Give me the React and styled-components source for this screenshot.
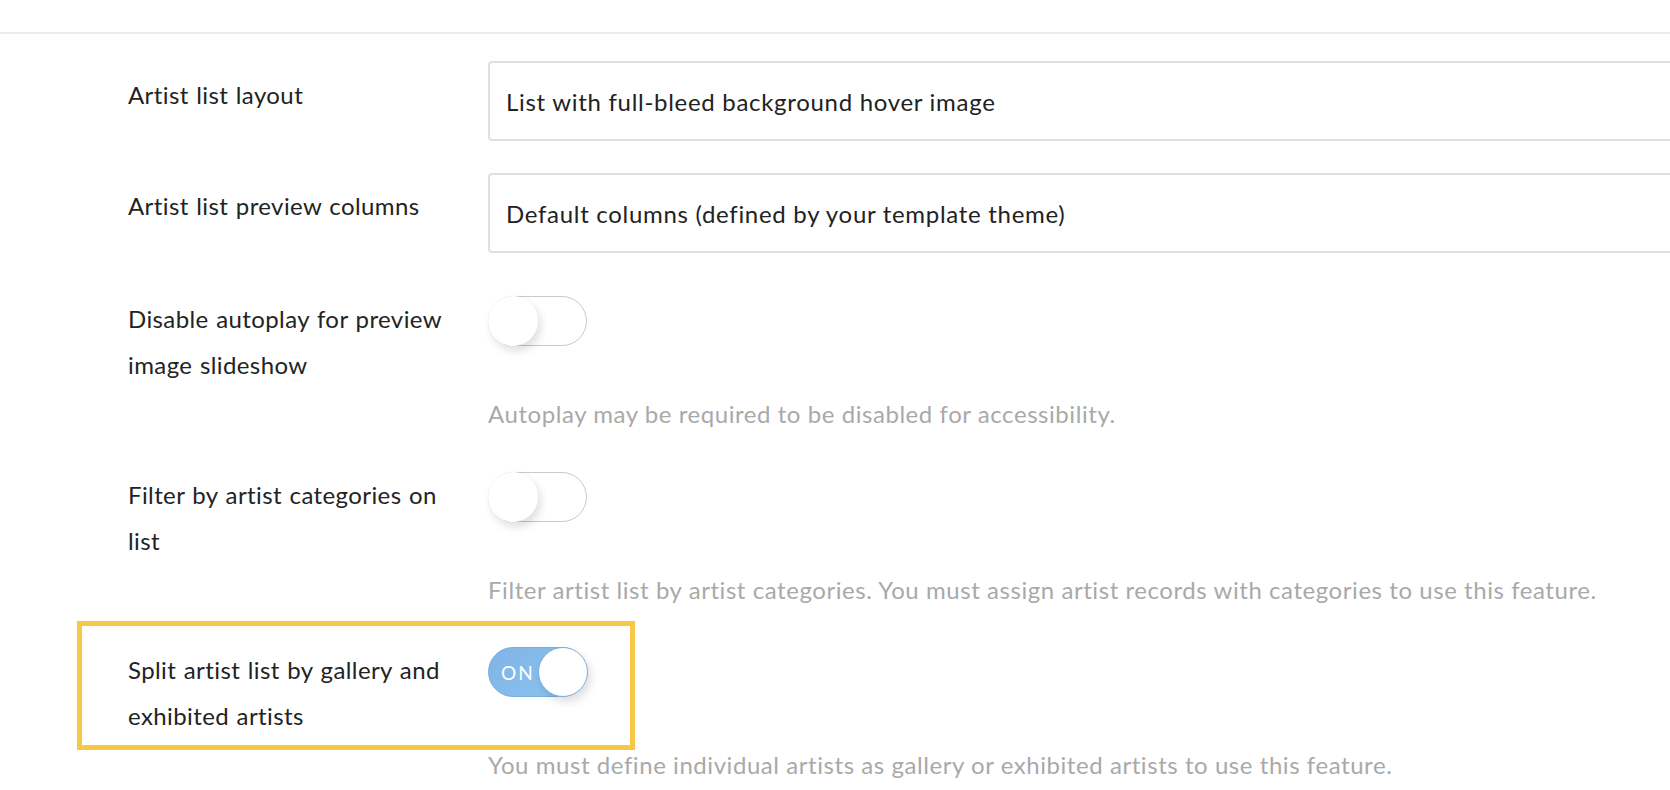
import React from "react";
import styled, { createGlobalStyle } from "styled-components";

const GlobalStyle = createGlobalStyle`
  html, body { margin: 0; padding: 0; background: #ffffff; }
  body {
    font-family: Lato, "Open Sans", "Liberation Sans", sans-serif;
    color: #222;
    overflow: hidden;
  }
`;

const Page = styled.div`
  width: 1670px;
  height: 790px;
  overflow: hidden;
  padding-top: 32px;
  box-sizing: border-box;
`;

const Form = styled.div`
  display: flex;
  flex-direction: column;
  border-top: 2px solid #ececec;
  padding-top: 27px;
`;

const Field = styled.div`
  position: relative;
  display: grid;
  grid-template-columns: 360px 1fr;
  grid-template-rows: auto auto;
  padding-left: 128px;
  margin-top: ${(p) => p.$gap || 0}px;
`;

const Label = styled.div`
  grid-column: 1;
  grid-row: 1;
  width: 326px;
  font-size: 24px;
  letter-spacing: 0.4px;
  word-spacing: 1px;
  line-height: 46px;
  color: #232323;
  padding-top: ${(p) => p.$offset || 0}px;
`;

const Select = styled.div`
  grid-column: 2;
  grid-row: 1;
  height: 80px;
  display: flex;
  align-items: center;
  box-sizing: border-box;
  border: 2px solid #e0e0e0;
  border-right: none;
  border-radius: 4px 0 0 4px;
  padding-left: 16px;
  margin-right: -20px;
  font-size: 24px;
  letter-spacing: 0.7px;
  color: #222;
  white-space: nowrap;
`;

const ToggleCell = styled.div`
  grid-column: 2;
  grid-row: 1;
  align-self: start;
`;

const Track = styled.div`
  position: relative;
  width: 99px;
  height: 50px;
  box-sizing: border-box;
  border-radius: 25px;
  border: 1.5px solid ${(p) => (p.$on ? "#7aaedc" : "#c9c9c9")};
  background: ${(p) =>
    p.$on ? "linear-gradient(135deg, #7fb3e4 0%, #8dc6f3 100%)" : "#ffffff"};
  display: flex;
  align-items: center;
`;

const OnText = styled.span`
  padding-left: 12px;
  font-size: 19px;
  letter-spacing: 2px;
  color: #ffffff;
`;

const Knob = styled.span`
  position: absolute;
  top: -1.5px;
  ${(p) => (p.$on ? "right: -1.5px;" : "left: -1.5px;")}
  width: 50px;
  height: 50px;
  box-sizing: border-box;
  border-radius: 50%;
  background: #ffffff;
  border: ${(p) => (p.$on ? "1.5px solid #7aaedc" : "none")};
  box-shadow: 3px 5px 9px rgba(0, 0, 0, 0.13);
`;

const Help = styled.div`
  grid-column: 2;
  grid-row: 2;
  margin-top: 3px;
  font-size: 24px;
  letter-spacing: 0.56px;
  line-height: 46px;
  color: #a9a9a9;
  white-space: nowrap;
`;

const Highlight = styled.div`
  position: absolute;
  left: 77px;
  top: -26px;
  width: 558px;
  height: 129px;
  box-sizing: border-box;
  border: 5px solid #f6c844;
  pointer-events: none;
`;

function Toggle({ on }) {
  return (
    <ToggleCell>
      <Track $on={on}>
        {on && <OnText>ON</OnText>}
        <Knob $on={on} />
      </Track>
    </ToggleCell>
  );
}

export default function App() {
  return (
    <>
      <GlobalStyle />
      <Page>
        <Form>
          <Field>
            <Label $offset={11}>Artist list layout</Label>
            <Select>List with full-bleed background hover image</Select>
          </Field>
          <Field $gap={32}>
            <Label $offset={10}>Artist list preview columns</Label>
            <Select>Default columns (defined by your template theme)</Select>
          </Field>
          <Field $gap={43}>
            <Label>Disable autoplay for preview image slideshow</Label>
            <Toggle on={false} />
            <Help>Autoplay may be required to be disabled for accessibility.</Help>
          </Field>
          <Field $gap={35}>
            <Label>Filter by artist categories on list</Label>
            <Toggle on={false} />
            <Help>
              Filter artist list by artist categories. You must assign artist records with categories to use this feature.
            </Help>
          </Field>
          <Field $gap={34}>
            <Highlight />
            <Label>Split artist list by gallery and exhibited artists</Label>
            <Toggle on={true} />
            <Help>
              You must define individual artists as gallery or exhibited artists to use this feature.
            </Help>
          </Field>
        </Form>
      </Page>
    </>
  );
}
